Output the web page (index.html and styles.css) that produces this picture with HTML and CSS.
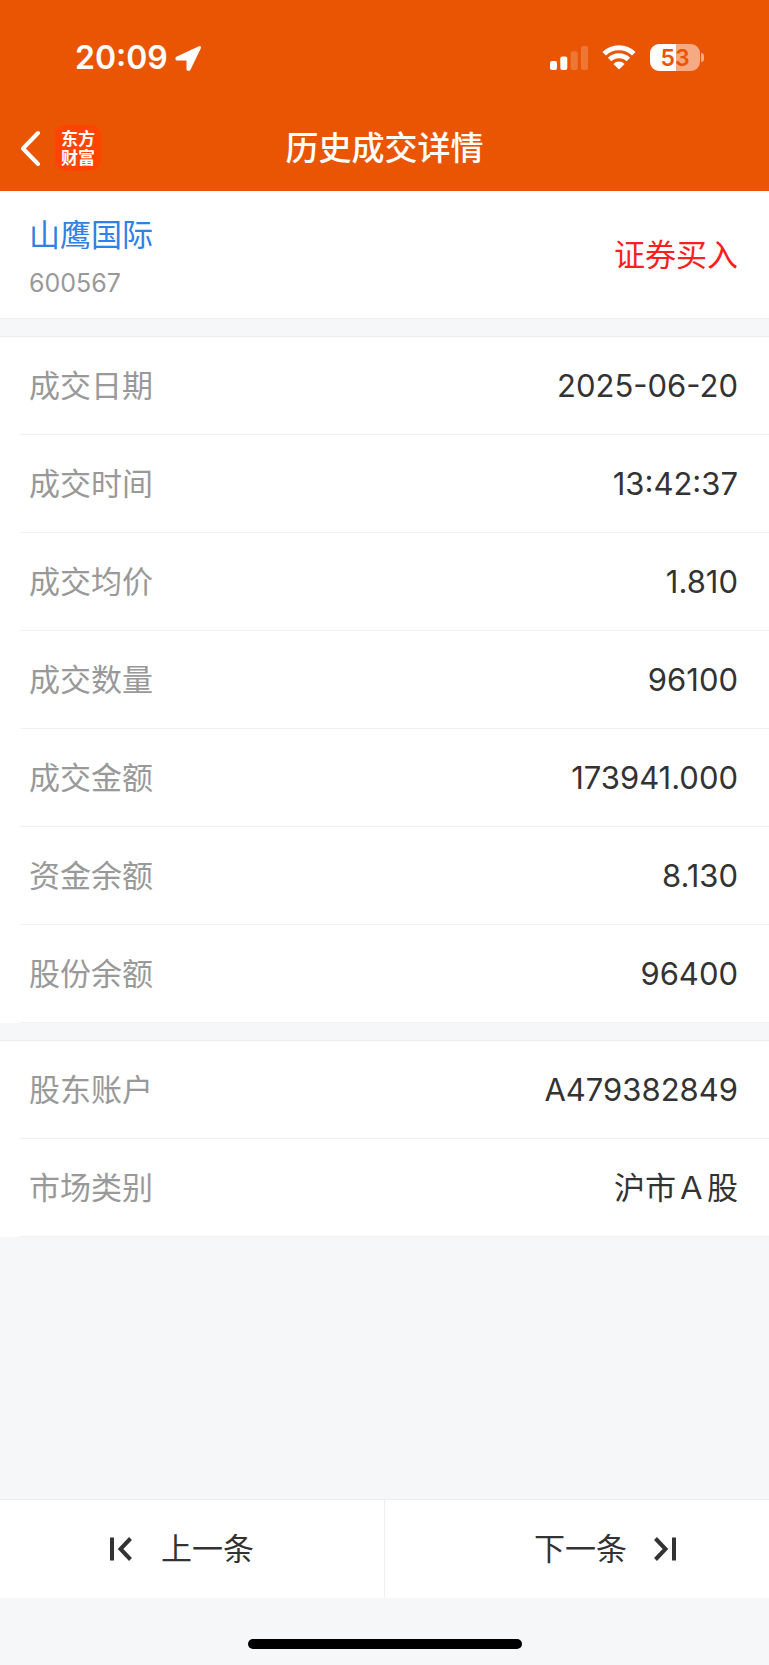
FILE: index.html
```html
<!DOCTYPE html>
<html lang="zh-CN">
<head>
<meta charset="utf-8">
<meta name="viewport" content="width=device-width, initial-scale=1">
<title>历史成交详情</title>
<link rel="stylesheet" href="styles.css">
</head>
<body>
<div class="page">
  <header class="header">
    <div class="status">
      <div class="status-left">
        <span class="clock">20:09</span>
        <svg class="locate" width="28" height="28" viewBox="0 0 28 28" aria-hidden="true"><path d="M25.500 3.500 L15 25.300 L14 25.300 L14 15 L3 15 L3 14 Z" fill="#fff" stroke="#fff" stroke-width="3" stroke-linejoin="round"/></svg>
      </div>
      <div class="status-right">
        <svg width="38" height="24" viewBox="0 0 38 24" fill="#fff" aria-hidden="true">
          <rect x="0" y="15" width="7" height="9" rx="2"/>
          <rect x="10.300" y="10.500" width="7" height="13.500" rx="2"/>
          <rect x="20.700" y="5.300" width="7" height="18.700" rx="2" opacity=".2"/>
          <rect x="31" y="0" width="7" height="24" rx="2" opacity=".2"/>
        </svg>
        <svg class="wifi" width="34" height="25" viewBox="0 0 34 25" aria-hidden="true">
          <g fill="none" stroke="#fff" stroke-width="5"><path d="M2.200 8.800 A21.200 21.200 0 0 1 31.800 8.800"/><path d="M7.600 14.500 A13.400 13.400 0 0 1 26.400 14.500"/></g>
          <path d="M17 24.500 L11.400 18.900 A8 8 0 0 1 22.600 18.900 Z" fill="#fff"/>
        </svg>
        <div class="battery"><span class="battery-level">53</span></div>
      </div>
    </div>
    <nav class="nav">
      <div class="nav-left">
        <button class="back" type="button" aria-label="返回">
          <svg width="20" height="36" viewBox="0 0 20 36" fill="none" stroke="#fff" stroke-width="4" stroke-linecap="round" stroke-linejoin="round" aria-hidden="true"><path d="M18 3 L3 18.500 L18 34"/></svg>
        </button>
        <div class="logo">东方财富</div>
      </div>
      <h1 class="title">历史成交详情</h1>
    </nav>
  </header>

  <main class="main">
    <section class="stock">
      <div class="stock-info">
        <a class="stock-name" href="#">山鹰国际</a>
        <span class="stock-code">600567</span>
      </div>
      <span class="side">证券买入</span>
    </section>

    <dl class="group">
      <div class="row"><dt>成交日期</dt><dd>2025-06-20</dd></div>
      <div class="row"><dt>成交时间</dt><dd>13:42:37</dd></div>
      <div class="row"><dt>成交均价</dt><dd>1.810</dd></div>
      <div class="row"><dt>成交数量</dt><dd>96100</dd></div>
      <div class="row"><dt>成交金额</dt><dd>173941.000</dd></div>
      <div class="row"><dt>资金余额</dt><dd>8.130</dd></div>
      <div class="row"><dt>股份余额</dt><dd>96400</dd></div>
    </dl>

    <dl class="group">
      <div class="row"><dt>股东账户</dt><dd>A479382849</dd></div>
      <div class="row"><dt>市场类别</dt><dd>沪市Ａ股</dd></div>
    </dl>
  </main>

  <footer class="footer">
    <div class="pager">
      <button class="pager-button prev" type="button">
        <svg width="22" height="24" viewBox="0 0 22 24" fill="none" stroke="#333" stroke-width="4" aria-hidden="true"><path d="M2 0.500 V23.500"/><path d="M20.500 1.500 L10.500 12 L20.500 22.500"/></svg>
        <span>上一条</span>
      </button>
      <button class="pager-button next" type="button">
        <span>下一条</span>
        <svg width="22" height="24" viewBox="0 0 22 24" fill="none" stroke="#333" stroke-width="4" aria-hidden="true"><path d="M20 0.500 V23.500"/><path d="M1.500 1.500 L11.500 12 L1.500 22.500"/></svg>
      </button>
    </div>
    <div class="home-indicator"></div>
  </footer>
</div>
</body>
</html>
```

FILE: styles.css
```css
* {
  box-sizing: border-box;
}

body {
  margin: 0;
  background: #f6f7f9;
  color: #333;
  font-family: Inter, "Noto Sans CJK SC", sans-serif;
  font-size: 31px;
  line-height: 40px;
}

button {
  margin: 0;
  padding: 0;
  border: 0;
  background: none;
  color: inherit;
  font: inherit;
}

svg {
  display: block;
  flex: none;
}

.page {
  display: flex;
  flex-direction: column;
  min-height: 100vh;
}

.header {
  background: #ea5504;
  color: #fff;
}

.status {
  display: flex;
  align-items: center;
  justify-content: space-between;
  height: 105px;
  padding: 10px 65px 0 75px;
}

.status-left,
.status-right {
  display: flex;
  align-items: center;
}

.status-left {
  gap: 6px;
}

.status-right {
  gap: 14px;
}

.clock {
  font-size: 32px;
  font-weight: 600;
}

.battery {
  position: relative;
  display: flex;
  align-items: center;
  justify-content: center;
  width: 50px;
  height: 27px;
  margin-right: 4px;
  border-radius: 9px;
  background: linear-gradient(90deg, #fff 53%, #f6aa81 53%);
  color: #ea5504;
}

.battery::after {
  content: "";
  position: absolute;
  top: 9px;
  right: -4px;
  width: 3px;
  height: 9px;
  border-radius: 0 4px 4px 0;
  background: #f6aa81;
}

.battery-level {
  font-size: 23px;
  font-weight: 600;
  line-height: 28px;
}

.nav {
  display: grid;
  grid-template-columns: 1fr auto 1fr;
  align-items: center;
  height: 86px;
  padding: 0 20px;
}

.nav-left {
  display: flex;
  align-items: center;
  gap: 15px;
}

.logo {
  width: 46px;
  height: 46px;
  padding: 3px 6px;
  border-radius: 10px;
  background: #ff4400;
  font-family: "Noto Sans CJK SC", sans-serif;
  font-size: 17px;
  font-weight: 700;
  line-height: 19px;
}

.title {
  margin: 0;
  font-size: 33px;
  font-weight: 500;
}

.main {
  display: flex;
  flex: 1;
  flex-direction: column;
  gap: 17px;
}

.stock {
  display: flex;
  align-items: center;
  justify-content: space-between;
  height: 128px;
  padding: 0 31px 0 29px;
  border-bottom: 1px solid #eeeff1;
  background: #fff;
}

.stock-info {
  display: flex;
  flex-direction: column;
  gap: 10px;
  padding-top: 7px;
}

.stock-name {
  color: #2f80e7;
  text-decoration: none;
}

.stock-code {
  color: #999;
  font-size: 25px;
  line-height: 36px;
}

.side {
  color: #fa2020;
}

.group {
  margin: 0;
  padding-left: 20px;
  border-top: 1px solid #ededef;
  background: #fff;
}

.row {
  display: flex;
  align-items: center;
  justify-content: space-between;
  height: 98px;
  padding: 0 31px 0 9px;
  border-bottom: 1px solid #f2f2f3;
}

.row dt {
  color: #999;
}

.row dd {
  margin: 0;
}

.pager {
  display: grid;
  grid-template-columns: 1fr 1fr;
  border-top: 1px solid #eeeff1;
  background: #fff;
}

.pager-button {
  display: flex;
  align-items: center;
  height: 98px;
}

.prev {
  gap: 29px;
  padding-left: 110px;
  border-right: 1px solid #eeeff1;
}

.next {
  gap: 27px;
  justify-content: flex-end;
  padding-right: 93px;
}

.home-indicator {
  width: 274px;
  height: 10px;
  margin: 41px auto 16px;
  border-radius: 5px;
  background: #000;
}
```
